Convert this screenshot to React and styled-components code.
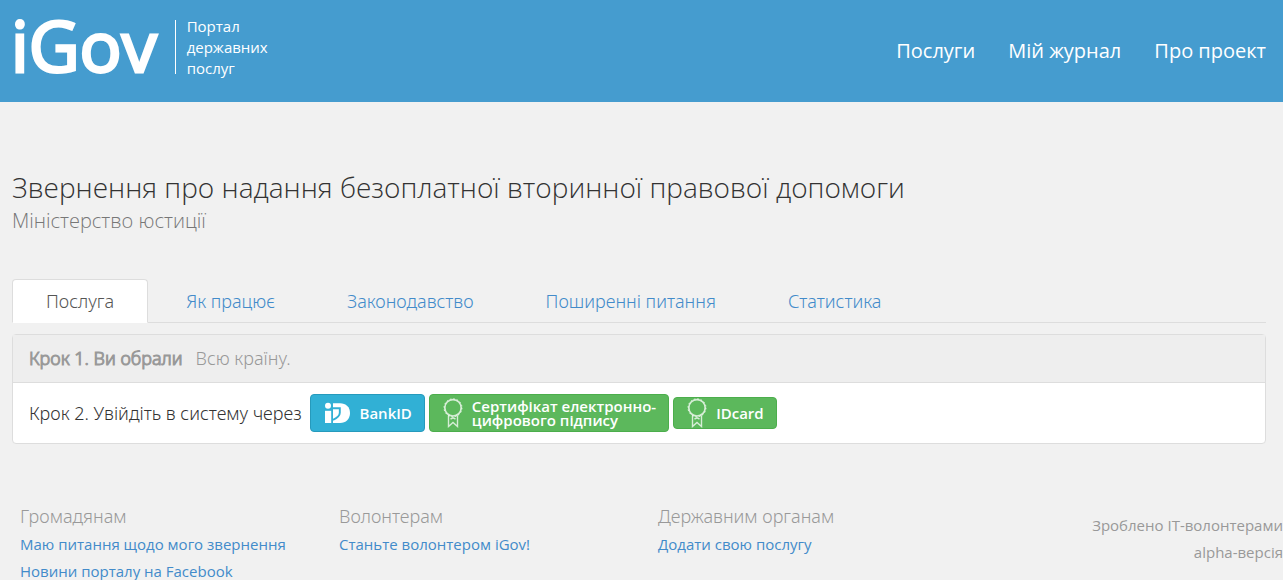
import React from 'react';
import styled, { createGlobalStyle, css } from 'styled-components';

const GlobalStyle = createGlobalStyle`
  * {
    box-sizing: border-box;
  }

  body {
    margin: 0;
    background: #f1f1f1;
    color: #333;
    font-family: 'Open Sans', 'Noto Sans', sans-serif;
    font-size: 18px;
    font-weight: 300;
    line-height: 25px;
  }

  a {
    color: #428bca;
    text-decoration: none;
  }
`;

const lightText = css`
  font-family: 'Noto Sans', 'Open Sans', sans-serif;
  font-weight: 300;
`;

const Header = styled.header`
  display: flex;
  justify-content: space-between;
  align-items: center;
  height: 102px;
  padding: 0 17px 0 10px;
  background: #459ccf;
`;

const Brand = styled.a`
  display: flex;
  align-items: center;
  margin-bottom: 8px;
  color: #fff;
`;

const Logo = styled.span`
  padding: 0 3px 4px 1px;
  font-size: 70px;
  font-weight: 400;
  line-height: 54px;
  -webkit-text-stroke: 3px currentColor;
`;

const Divider = styled.span`
  width: 1px;
  height: 54px;
  margin: 0 11px 0 15px;
  background: #fff;
`;

const Tagline = styled.span`
  width: 90px;
  font-size: 15px;
  font-weight: 400;
  line-height: 21px;
`;

const Nav = styled.nav`
  display: flex;
  gap: 33px;
`;

const NavLink = styled.a`
  color: #fff;
  font-size: 20px;
  font-weight: 400;
  line-height: 26px;
`;

const Content = styled.main`
  margin: 69px 17px 0 12px;
`;

const Title = styled.h1`
  margin: 0;
  font-size: 28px;
  font-weight: 300;
  line-height: 32px;
`;

const Ministry = styled.p`
  margin: 5px 0 45px;
  color: #777;
  font-size: 20px;
  line-height: 26px;
`;

const Tabs = styled.nav`
  display: flex;
  gap: 4px;
  border-bottom: 1px solid #ddd;
`;

const Tab = styled.a`
  ${lightText}
  margin-bottom: -1px;
  padding: 9px 33px 8px;
  border: 1px solid transparent;
  border-radius: 4px 4px 0 0;

  ${({ $active }) => $active && css`
    border-color: #ddd #ddd #fff;
    background: #fff;
    color: #555;
  `}
`;

const Steps = styled.section`
  ${lightText}
  margin-top: 11px;
  border: 1px solid #ddd;
  border-radius: 4px;
  background: #fff;
`;

const Step = styled.div`
  display: flex;
  align-items: center;
  padding: 11px 16px;

  ${({ $done }) => $done && css`
    gap: 13px;
    border-bottom: 1px solid #ddd;
    background: #eee;
    color: #999;
  `}
`;

const StepName = styled.strong`
  font-weight: 300;
  -webkit-text-stroke: 1px currentColor;
`;

const Buttons = styled.div`
  display: flex;
  align-items: center;
  gap: 4px;
  margin-left: 8px;
`;

const Button = styled.button`
  display: flex;
  align-items: center;
  gap: 9px;
  min-height: ${({ $tall }) => ($tall ? 38 : 31)}px;
  padding: 0 12px 0 13px;
  border: 1px solid ${({ $blue }) => ($blue ? '#269abc' : '#4cae4c')};
  border-radius: 4px;
  background: ${({ $blue }) => ($blue ? '#31b0d5' : '#5cb85c')};
  color: #fff;
  font-family: 'Open Sans', sans-serif;
  font-size: 15px;
  font-weight: 600;
  line-height: 14px;
  text-align: left;
  cursor: pointer;
`;

const Footer = styled.footer`
  display: grid;
  grid-template-columns: 319fr 319fr 319fr 326fr;
  margin-top: 59px;
  color: #999;
`;

const FooterColumn = styled.div`
  padding-left: 20px;
`;

const FooterTitle = styled.h2`
  ${lightText}
  margin: 0 0 1px;
  font-size: 18px;
  line-height: 27px;
`;

const FooterLink = styled.a`
  display: block;
  font-size: 15px;
  font-weight: 400;
  line-height: 27px;
`;

const Credits = styled.div`
  padding-top: 9px;
  font-size: 15px;
  font-weight: 400;
  line-height: 27px;
  text-align: right;
`;

const BankIcon = () => (
  <svg width="27" height="22" viewBox="0 0 27 22" fill="#fff" aria-hidden="true">
    <circle cx="4" cy="3.800" r="3" />
    <path d="M1 8.800h6.200V21H1z" />
    <path d="M9 1.200h7C22 1.200 26 5 26 11s-4 10-10 10H9z" />
    <path d="M8.500 6.200h7.300v4.600c0 2.700-2.300 5-6.800 7" fill="none" stroke="#31b0d5" strokeWidth="1.900" />
  </svg>
);

const BadgeIcon = () => (
  <svg width="20" height="30" viewBox="0 0 20 30" fill="none" stroke="#fff" strokeOpacity=".75" aria-hidden="true">
    <circle cx="10" cy="9.800" r="8.200" strokeWidth="1.700" />
    <circle cx="10" cy="9.800" r="9" strokeWidth="1" strokeDasharray="1.600 1.940" />
    <path d="M5.500 17.500v11l4.500-4 4.500 4v-11M7.500 21l2.500-1.200 2.500 1.200" strokeWidth="1.400" />
  </svg>
);

const tabs = ['Послуга', 'Як працює', 'Законодавство', 'Поширенні питання', 'Статистика'];

const columns = [
  { title: 'Громадянам', links: ['Маю питання щодо мого звернення', 'Новини порталу на Facebook'] },
  { title: 'Волонтерам', links: ['Станьте волонтером iGov!'] },
  { title: 'Державним органам', links: ['Додати свою послугу'] },
];

export default () => (
  <>
    <GlobalStyle />
    <Header>
      <Brand href="#">
        <Logo>iGov</Logo>
        <Divider />
        <Tagline>Портал державних послуг</Tagline>
      </Brand>
      <Nav>
        <NavLink href="#">Послуги</NavLink>
        <NavLink href="#">Мій журнал</NavLink>
        <NavLink href="#">Про проект</NavLink>
      </Nav>
    </Header>
    <Content>
      <Title>Звернення про надання безоплатної вторинної правової допомоги</Title>
      <Ministry>Міністерство юстиції</Ministry>
      <Tabs>
        {tabs.map((tab, i) => (
          <Tab key={tab} href="#" $active={i === 0}>{tab}</Tab>
        ))}
      </Tabs>
      <Steps>
        <Step $done>
          <StepName>Крок 1. Ви обрали</StepName>
          <span>Всю країну.</span>
        </Step>
        <Step>
          <span>Крок 2. Увійдіть в систему через</span>
          <Buttons>
            <Button type="button" $blue $tall>
              <BankIcon />
              <span>BankID</span>
            </Button>
            <Button type="button" $tall>
              <BadgeIcon />
              <span>
                Сертифікат електронно-
                <br />
                цифрового підпису
              </span>
            </Button>
            <Button type="button">
              <BadgeIcon />
              <span>IDcard</span>
            </Button>
          </Buttons>
        </Step>
      </Steps>
    </Content>
    <Footer>
      {columns.map(({ title, links }) => (
        <FooterColumn key={title}>
          <FooterTitle>{title}</FooterTitle>
          {links.map(link => (
            <FooterLink key={link} href="#">{link}</FooterLink>
          ))}
        </FooterColumn>
      ))}
      <Credits>
        <div>Зроблено IT-волонтерами</div>
        <div>alpha-версія</div>
      </Credits>
    </Footer>
  </>
);
